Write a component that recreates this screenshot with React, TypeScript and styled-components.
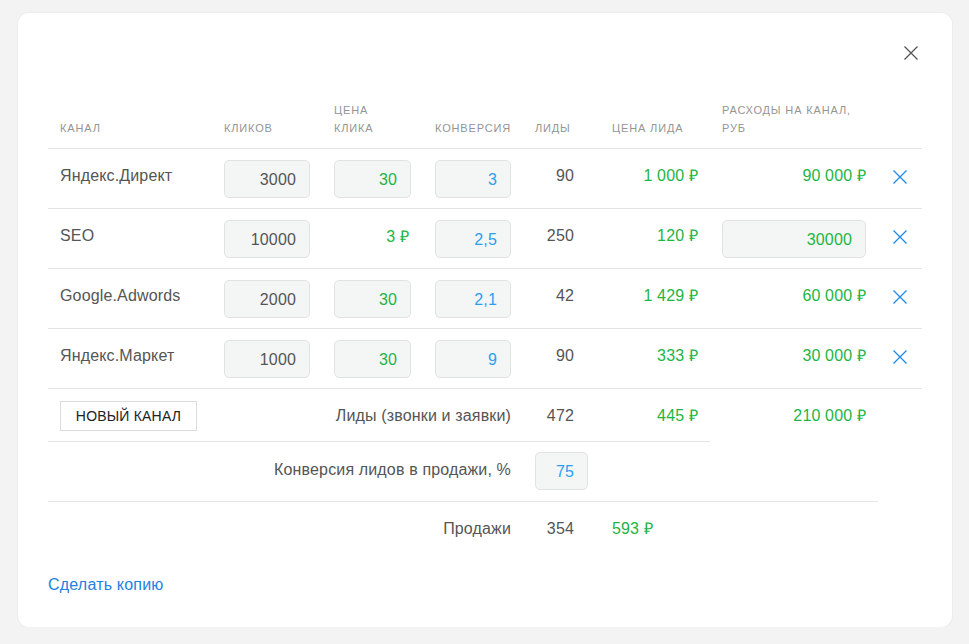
import React from "react";
import styled, { createGlobalStyle } from "styled-components";

const Global = createGlobalStyle`
  html, body { margin: 0; padding: 0; background: #f3f3f3; }
  body { font-family: "Liberation Sans", Arial, Helvetica, sans-serif; color: #555; }
  * { box-sizing: border-box; }
`;

const COLS = "176px 110px 101px 100px 77px 110px 156px 44px";

const Card = styled.div`
  margin: 13px 0 0 18px;
  width: 934px;
  height: 614px;
  background: #fff;
  border-radius: 11px;
  box-shadow: 0 0 0 1px #ececec;
  padding: 30px 30px 0 30px;
  display: flex;
  flex-direction: column;
`;

const TopBar = styled.div`
  height: 58px;
  display: flex;
  justify-content: flex-end;
  align-items: flex-start;
  padding: 3px 4px 0 0;
`;

const CloseButton = styled.button`
  border: 0;
  background: none;
  padding: 0;
  width: 14px;
  height: 14px;
  cursor: pointer;
  display: flex;
`;

const HeaderRow = styled.div`
  display: grid;
  grid-template-columns: ${COLS};
  height: 48px;
  border-bottom: 1px solid #e4e4e4;
`;

const HeadCell = styled.div<{ $pl?: number }>`
  display: flex;
  align-items: flex-end;
  padding: 0 0 11px ${(p) => p.$pl ?? 0}px;
  font-size: 11px;
  letter-spacing: 0.85px;
  line-height: 18px;
  text-transform: uppercase;
  color: #959595;
  white-space: nowrap;
`;

const Row = styled.div`
  display: grid;
  grid-template-columns: ${COLS};
  height: 60px;
  border-bottom: 1px solid #e4e4e4;
`;

const FootRow = styled.div<{ $h: number }>`
  display: grid;
  grid-template-columns: ${COLS};
  height: ${(p) => p.$h}px;
`;

const Divider = styled.div<{ $w: number }>`
  width: ${(p) => p.$w}px;
  height: 1px;
  background: #e4e4e4;
`;

type Tone = "dark" | "green" | "blue";
const toneColor = (t?: Tone) =>
  t === "green" ? "#1eb543" : t === "blue" ? "#2b9ff0" : "#555";

const Cell = styled.div<{ $pl?: number; $pr?: number; $pt?: number; $align?: string; $tone?: Tone; $span?: number }>`
  grid-column: span ${(p) => p.$span ?? 1};
  padding: ${(p) => p.$pt ?? 17}px ${(p) => p.$pr ?? 0}px 0 ${(p) => p.$pl ?? 0}px;
  text-align: ${(p) => p.$align ?? "left"};
  font-size: 16px;
  letter-spacing: 0.15px;
  line-height: 20px;
  color: ${(p) => toneColor(p.$tone)};
  white-space: nowrap;
`;

const InputCell = styled.div<{ $pt?: number }>`
  padding-top: ${(p) => p.$pt ?? 11}px;
`;

const NumInput = styled.div<{ $w: number; $tone?: Tone }>`
  width: ${(p) => p.$w}px;
  height: 38px;
  border: 1px solid #e1e3e3;
  border-radius: 5px;
  background: #f4f5f5;
  font-size: 16px;
  letter-spacing: 0.15px;
  line-height: 20px;
  padding: 9px 13px 0 0;
  text-align: right;
  color: ${(p) => toneColor(p.$tone)};
`;

const IconCell = styled.div`
  display: flex;
  justify-content: center;
  padding-top: 21px;
`;

const RemoveButton = styled.button`
  border: 0;
  background: none;
  padding: 0;
  width: 14px;
  height: 14px;
  display: flex;
  cursor: pointer;
`;

const NewChannel = styled.button`
  margin: 12px 0 0 12px;
  height: 30px;
  width: 137px;
  border: 1px solid #dcdcdc;
  background: #fff;
  font-family: "Liberation Sans", Arial, sans-serif;
  font-size: 14px;
  letter-spacing: 0.2px;
  color: #222;
  text-transform: uppercase;
  padding: 0;
  cursor: pointer;
`;

const CopyLink = styled.a`
  margin-top: 28px;
  font-size: 16px;
  letter-spacing: 0.2px;
  line-height: 20px;
  color: #2481e2;
  text-decoration: none;
  cursor: pointer;
  align-self: flex-start;
`;

const Cross = ({ color, w }: { color: string; w: number }) => (
  <svg width="14" height="14" viewBox="0 0 14 14">
    <path d="M0.5 0.5 L13.5 13.5 M13.5 0.5 L0.5 13.5" stroke={color} strokeWidth={w} fill="none" />
  </svg>
);

type RowData = {
  name: string;
  clicks: string;
  price: string;
  priceInput: boolean;
  conv: string;
  leads: string;
  leadPrice: string;
  cost: string;
  costInput: boolean;
};

const rows: RowData[] = [
  { name: "Яндекс.Директ", clicks: "3000", price: "30", priceInput: true, conv: "3", leads: "90", leadPrice: "1 000 ₽", cost: "90 000 ₽", costInput: false },
  { name: "SEO", clicks: "10000", price: "3 ₽", priceInput: false, conv: "2,5", leads: "250", leadPrice: "120 ₽", cost: "30000", costInput: true },
  { name: "Google.Adwords", clicks: "2000", price: "30", priceInput: true, conv: "2,1", leads: "42", leadPrice: "1 429 ₽", cost: "60 000 ₽", costInput: false },
  { name: "Яндекс.Маркет", clicks: "1000", price: "30", priceInput: true, conv: "9", leads: "90", leadPrice: "333 ₽", cost: "30 000 ₽", costInput: false },
];

export default function App() {
  return (
    <>
      <Global />
      <Card>
        <TopBar>
          <CloseButton aria-label="Закрыть">
            <Cross color="#555" w={1.3} />
          </CloseButton>
        </TopBar>

        <HeaderRow>
          <HeadCell $pl={12}>Канал</HeadCell>
          <HeadCell>Кликов</HeadCell>
          <HeadCell>
            Цена
            <br />
            клика
          </HeadCell>
          <HeadCell>Конверсия</HeadCell>
          <HeadCell>Лиды</HeadCell>
          <HeadCell>Цена лида</HeadCell>
          <HeadCell>
            Расходы на канал,
            <br />
            руб
          </HeadCell>
          <HeadCell />
        </HeaderRow>

        {rows.map((r) => (
          <Row key={r.name}>
            <Cell $pl={12}>{r.name}</Cell>
            <InputCell>
              <NumInput $w={86}>{r.clicks}</NumInput>
            </InputCell>
            {r.priceInput ? (
              <InputCell>
                <NumInput $w={77} $tone="green">{r.price}</NumInput>
              </InputCell>
            ) : (
              <Cell $align="right" $pr={26} $pt={18} $tone="green">{r.price}</Cell>
            )}
            <InputCell>
              <NumInput $w={76} $tone="blue">{r.conv}</NumInput>
            </InputCell>
            <Cell $align="right" $pr={38}>{r.leads}</Cell>
            <Cell $align="right" $pr={24} $tone="green">{r.leadPrice}</Cell>
            {r.costInput ? (
              <InputCell>
                <NumInput $w={144} $tone="green">{r.cost}</NumInput>
              </InputCell>
            ) : (
              <Cell $align="right" $pr={12} $tone="green">{r.cost}</Cell>
            )}
            <IconCell>
              <RemoveButton aria-label="Удалить">
                <Cross color="#1e8ae8" w={1.3} />
              </RemoveButton>
            </IconCell>
          </Row>
        ))}

        <FootRow $h={52}>
          <div>
            <NewChannel>Новый канал</NewChannel>
          </div>
          <Cell $span={3} $align="right" $pr={24}>Лиды (звонки и заявки)</Cell>
          <Cell $align="right" $pr={38}>472</Cell>
          <Cell $align="right" $pr={24} $tone="green">445 ₽</Cell>
          <Cell $align="right" $pr={12} $tone="green">210 000 ₽</Cell>
          <div />
        </FootRow>
        <Divider $w={662} />
        <FootRow $h={59}>
          <Cell $span={4} $align="right" $pr={24} $pt={18}>Конверсия лидов в продажи, %</Cell>
          <InputCell $pt={10}>
            <NumInput $w={53} $tone="blue">75</NumInput>
          </InputCell>
        </FootRow>
        <Divider $w={830} />
        <FootRow $h={45}>
          <Cell $span={4} $align="right" $pr={24}>Продажи</Cell>
          <Cell $align="right" $pr={38}>354</Cell>
          <Cell $tone="green">593 ₽</Cell>
        </FootRow>

        <CopyLink>Сделать копию</CopyLink>
      </Card>
    </>
  );
}
